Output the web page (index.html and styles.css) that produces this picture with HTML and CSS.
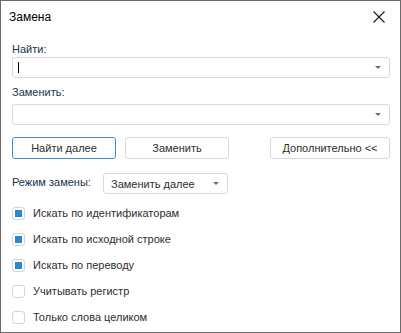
FILE: index.html
```html
<!DOCTYPE html>
<html lang="ru">
<head>
    <meta charset="UTF-8">
    <meta name="viewport" content="width=device-width, initial-scale=1.0">
    <title>Замена</title>
    <link rel="stylesheet" href="styles.css">
</head>
<body>
    <div class="dialog">
        <div class="title-bar">
            <span class="title">Замена</span>
            <button type="button" class="close-btn" aria-label="Закрыть">
                <svg width="12" height="12" viewBox="0 0 12 12">
                    <path d="M0.5 0.5 L11.5 11.5 M11.5 0.5 L0.5 11.5" stroke="#1a1a1a" stroke-width="1.1" fill="none"/>
                </svg>
            </button>
        </div>

        <div class="content">
            <label class="field-label label-find" for="find">Найти:</label>
            <div class="combo">
                <input type="text" id="find" class="combo-input">
                <span class="caret"></span>
                <span class="arrow"></span>
            </div>

            <label class="field-label label-replace" for="replace">Заменить:</label>
            <div class="combo combo-replace">
                <input type="text" id="replace" class="combo-input">
                <span class="arrow"></span>
            </div>

            <div class="buttons">
                <button type="button" class="btn btn-primary">Найти далее</button>
                <button type="button" class="btn">Заменить</button>
                <button type="button" class="btn btn-more">Дополнительно &lt;&lt;</button>
            </div>

            <div class="mode-row">
                <span class="mode-label">Режим замены:</span>
                <div class="select">
                    <span>Заменить далее</span>
                    <span class="arrow"></span>
                </div>
            </div>

            <div class="options">
                <label class="check"><span class="box checked"></span>Искать по идентификаторам</label>
                <label class="check"><span class="box checked"></span>Искать по исходной строке</label>
                <label class="check"><span class="box checked"></span>Искать по переводу</label>
                <label class="check"><span class="box"></span>Учитывать регистр</label>
                <label class="check"><span class="box"></span>Только слова целиком</label>
            </div>
        </div>
    </div>
</body>
</html>
```

FILE: styles.css
```css
body {
    margin: 0;
    font-family: "Liberation Sans", Arial, sans-serif;
    font-size: 11px;
    color: #2e2e2e;
    background: #ffffff;
}
.dialog {
    width: 401px;
    height: 333px;
    box-sizing: border-box;
    border: 1px solid #6b6b6b;
    background: #ffffff;
}
.title-bar {
    height: 31px;
    display: flex;
    align-items: center;
    justify-content: space-between;
    padding: 0 15px 0 8px;
}
.title {
    color: #000;
    font-size: 12px;
}
.close-btn {
    border: none;
    background: none;
    padding: 0;
    width: 12px;
    height: 12px;
    display: flex;
}
.content {
    padding: 0 10px 0 11px;
}
.field-label {
    display: block;
    line-height: 15px;
    color: #22324a;
}
.label-find {
    margin-top: 10px;
}
.label-replace {
    margin-top: 7px;
}
.combo {
    position: relative;
    height: 21px;
    box-sizing: border-box;
    border: 1px solid #d9d9d9;
    border-radius: 3px;
}
.combo-replace {
    margin-top: 4px;
}
.combo-input {
    width: 100%;
    height: 100%;
    box-sizing: border-box;
    border: none;
    outline: none;
    padding: 0 4px;
    font: inherit;
    background: transparent;
}
.caret {
    position: absolute;
    left: 5px;
    top: 4px;
    width: 1px;
    height: 11px;
    background: #000;
}
.arrow {
    position: absolute;
    right: 8px;
    top: 8px;
    width: 0;
    height: 0;
    border-left: 3px solid transparent;
    border-right: 3px solid transparent;
    border-top: 3px solid #6e6e6e;
}
.buttons {
    display: flex;
    margin-top: 12px;
    gap: 9px;
}
.btn {
    height: 22px;
    width: 104px;
    box-sizing: border-box;
    border: 1px solid #d9d9d9;
    border-radius: 3px;
    background: #ffffff;
    font: inherit;
    color: #2e2e2e;
    padding: 0;
}
.btn-primary {
    border-color: #3d8fc9;
}
.btn-more {
    width: 120px;
    margin-left: auto;
}
.mode-row {
    display: flex;
    align-items: center;
    margin-top: 14px;
}
.mode-label {
    width: 91px;
    color: #22324a;
    margin-top: -4px;
}
.select {
    position: relative;
    width: 125px;
    height: 21px;
    box-sizing: border-box;
    border: 1px solid #d9d9d9;
    border-radius: 3px;
    display: flex;
    align-items: center;
    padding-left: 7px;
}
.options {
    margin-top: 6px;
}
.check {
    display: flex;
    align-items: center;
    height: 26px;
    gap: 8px;
}
.box {
    width: 13px;
    height: 13px;
    box-sizing: border-box;
    border: 1px solid #d4d4d4;
    border-radius: 3px;
    display: flex;
    align-items: center;
    justify-content: center;
}
.box.checked::after {
    content: "";
    width: 7px;
    height: 7px;
    background: #2a88cf;
}
```
